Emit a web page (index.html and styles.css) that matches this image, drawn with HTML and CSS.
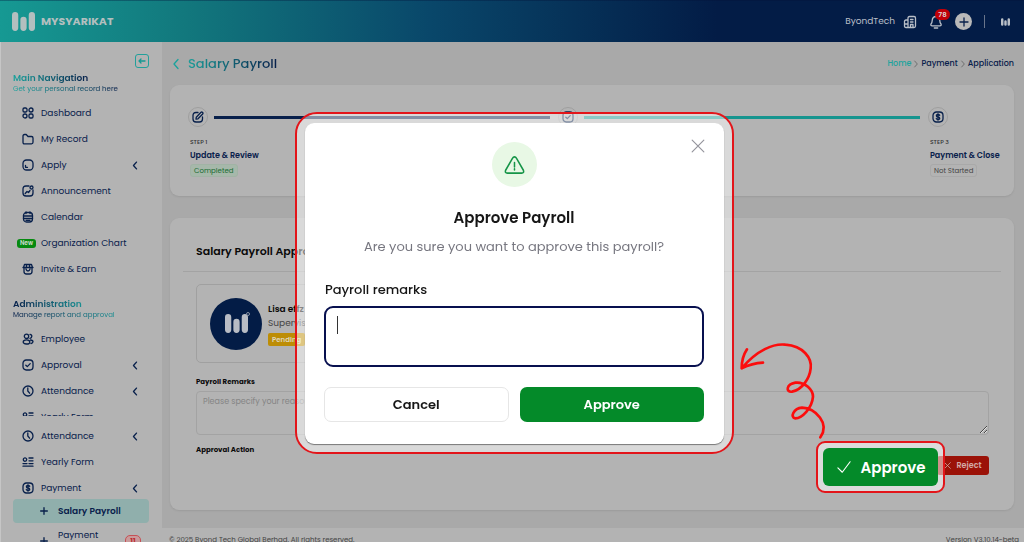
FILE: index.html
```html
<!DOCTYPE html>
<html lang="en">
<head>
<meta charset="utf-8">
<meta name="viewport" content="width=device-width, initial-scale=1">
<title>Salary Payroll</title>
<link rel="stylesheet" href="styles.css">
</head>
<body>
<svg class="sprite" aria-hidden="true">
  <symbol id="i-grid" viewBox="0 0 12 12"><rect x="1" y="1" width="4" height="4" rx="1.3"/><rect x="7" y="1" width="4" height="4" rx="2"/><rect x="1" y="7" width="4" height="4" rx="2"/><rect x="7" y="7" width="4" height="4" rx="1.3"/></symbol>
  <symbol id="i-folder" viewBox="0 0 12 12"><path d="M1 9.300V3Q1 1.500 2.500 1.500H4.200L6 3.500H9.500Q11 3.500 11 5V9.300Q11 10.800 9.500 10.800H2.500Q1 10.800 1 9.300Z"/></symbol>
  <symbol id="i-apply" viewBox="0 0 12 12"><rect x="1" y="1" width="10" height="10" rx="3.500"/><path d="M3.500 6.500V8.300H5.500"/></symbol>
  <symbol id="i-news" viewBox="0 0 12 12"><path d="M7 1H4Q1 1 1 4V8Q1 11 4 11H8Q11 11 11 8V5M3.200 8.500 5 6.500 6.500 7.500 8 5.500"/><circle cx="9.500" cy="2.500" r="1.500"/></symbol>
  <symbol id="i-calendar" viewBox="0 0 12 12"><rect x="1.500" y="1.500" width="9" height="9.500" rx="3"/><path d="M4 .8V2.500M8 .8V2.500M1.500 5H10.500M1.500 7.500H10.500M4 9.300H8"/></symbol>
  <symbol id="i-gift" viewBox="0 0 12 12"><path d="M1.500 4.500 2.500 1.500H9.500L10.500 4.500M1 4.500H11M2 5V8.500Q2 11 4.500 11H7.500Q10 11 10 8.500V5M4 6Q4.500 8 6 8T8 6M4.500 1.500V3.500M7.500 1.500V3.500"/></symbol>
  <symbol id="i-users" viewBox="0 0 12 12"><circle cx="4.500" cy="3.300" r="2.200"/><path d="M1.200 9Q1.200 6.800 4.500 6.800T7.800 9 4.500 11 1.200 9ZM8 1.300Q10 1.600 9.800 3.400 9.600 5 8 5.300M8.500 7Q11 7.300 11 8.800 10.900 10 9 10.500"/></symbol>
  <symbol id="i-check" viewBox="0 0 12 12"><rect x="1" y="1" width="10" height="10" rx="3.200"/><path d="M3.800 6.200 5.300 7.600 8.200 4.600"/></symbol>
  <symbol id="i-clock" viewBox="0 0 12 12"><circle cx="6" cy="6" r="5"/><path d="M5.800 3V6L7.600 8.200"/></symbol>
  <symbol id="i-form" viewBox="0 0 12 12"><circle cx="3" cy="3.600" r="1.700"/><path d="M7 2H11M7 4.800H11M1 7.600H5M7 7.600H11M1 10.200H11"/></symbol>
  <symbol id="i-dollar" viewBox="0 0 12 12"><rect x="1" y="1" width="10" height="10" rx="3.400"/><path d="M7.700 4.300Q7.200 3.500 6 3.500 4.400 3.500 4.400 4.700T6 6 7.700 7.300 6 8.500Q4.700 8.500 4.300 7.600M6 2.700V9.300"/></symbol>
  <symbol id="i-edit" viewBox="0 0 12 12"><path d="M6 1.500H4Q1 1.500 1 4.500V8Q1 11 4 11H7.500Q10.500 11 10.500 8V6M4 8.200 4.300 6.200 9 1.300Q9.800.7 10.600 1.500T10.700 3L6 7.800Z"/></symbol>
  <symbol id="i-left" viewBox="0 0 12 12"><path d="M8 1.500 4 6 8 10.500"/></symbol>
  <symbol id="i-right" viewBox="0 0 12 12"><path d="M4 1.500 8 6 4 10.500"/></symbol>
  <symbol id="i-plus" viewBox="0 0 12 12"><path d="M6 2V10M2 6H10"/></symbol>
  <symbol id="i-x" viewBox="0 0 12 12"><path d="M1 1 11 11M11 1 1 11"/></symbol>
  <symbol id="i-bars" viewBox="0 0 22 18"><path d="M3 3V15M11 7.500V15M19 3V15"/></symbol>
</svg>

<header class="topbar">
  <a class="brand" href="#"><svg class="brand-mark"><use href="#i-bars"/></svg>MYSYARIKAT</a>
  <div class="topbar-tools">
    <span class="company">ByondTech</span>
    <button class="tool" aria-label="Company"><svg class="icon icon-lg" viewBox="0 0 14 14"><path d="M5 12.500H3Q1.500 12.500 1.500 11V6.500Q1.500 5 3 5H5M1.500 9H5M5 12.500V3Q5 1.500 6.500 1.500H11Q12.500 1.500 12.500 3V11Q12.500 12.500 11 12.500ZM7.500 4.500H10M7.500 7H10M7.500 12.500V9.500H10V12.500"/></svg></button>
    <button class="tool bell" aria-label="Notifications"><svg class="icon icon-lg" viewBox="0 0 14 14"><path d="M7 1.500Q3.500 1.500 3.200 5.500 3.200 7.500 2 9 1.300 10.800 3.200 10.800H10.800Q12.700 10.800 12 9 10.800 7.500 10.800 5.500 10.500 1.500 7 1.500ZM5.300 13H8.700"/></svg><span class="count">78</span></button>
    <button class="add" aria-label="Add"><svg class="icon"><use href="#i-plus"/></svg></button>
    <span class="rule"></span>
    <button class="avatar-sm" aria-label="Account"><svg><use href="#i-bars"/></svg></button>
  </div>
</header>

<div class="shell">
  <aside class="sidebar">
    <button class="collapse" aria-label="Collapse menu"><svg class="icon"><path d="M9 6H3M5 4 3 6 5 8"/></svg></button>
    <div class="nav-head"><h2 class="grad-main">Main Navigation</h2><p class="grad-main">Get your personal record here</p></div>
    <nav class="nav">
      <a href="#"><svg class="icon"><use href="#i-grid"/></svg>Dashboard</a>
      <a href="#"><svg class="icon"><use href="#i-folder"/></svg>My Record</a>
      <a href="#"><svg class="icon"><use href="#i-apply"/></svg>Apply<svg class="icon chev"><use href="#i-left"/></svg></a>
      <a href="#"><svg class="icon"><use href="#i-news"/></svg>Announcement</a>
      <a href="#"><svg class="icon"><use href="#i-calendar"/></svg>Calendar</a>
      <a href="#" class="has-new"><span class="new">New</span>Organization Chart</a>
      <a href="#"><svg class="icon"><use href="#i-gift"/></svg>Invite &amp; Earn</a>
    </nav>
    <div class="nav-head admin"><h2 class="grad-admin">Administration</h2><p class="grad-admin">Manage report and approval</p></div>
    <nav class="nav">
      <a href="#"><svg class="icon"><use href="#i-users"/></svg>Employee</a>
      <a href="#"><svg class="icon"><use href="#i-check"/></svg>Approval<svg class="icon chev"><use href="#i-left"/></svg></a>
      <a href="#"><svg class="icon"><use href="#i-clock"/></svg>Attendance<svg class="icon chev"><use href="#i-left"/></svg></a>
      <div class="cut"><a href="#"><svg class="icon"><use href="#i-form"/></svg>Yearly Form</a></div>
      <a href="#"><svg class="icon"><use href="#i-clock"/></svg>Attendance<svg class="icon chev"><use href="#i-left"/></svg></a>
      <a href="#"><svg class="icon"><use href="#i-form"/></svg>Yearly Form</a>
      <a href="#"><svg class="icon"><use href="#i-dollar"/></svg>Payment<svg class="icon chev"><use href="#i-left"/></svg></a>
      <a href="#" class="sub active"><svg class="icon"><use href="#i-plus"/></svg>Salary Payroll</a>
      <a href="#" class="sub tall"><svg class="icon"><use href="#i-plus"/></svg><span>Payment</span><b class="pill">11</b></a>
    </nav>
  </aside>

  <main class="main">
    <div class="content">
      <div class="page-head">
        <h1><svg class="icon"><use href="#i-left"/></svg><span>Salary Payroll</span></h1>
        <nav class="crumbs" aria-label="Breadcrumb"><a class="home" href="#">Home</a><svg class="icon"><use href="#i-right"/></svg><a href="#">Payment</a><svg class="icon"><use href="#i-right"/></svg><a href="#">Application</a></nav>
      </div>

      <section class="card steps">
        <div class="step"><div class="track"><span class="dot"><svg class="icon"><use href="#i-edit"/></svg></span><i class="line navy"></i></div><small>STEP 1</small><strong>Update &amp; Review</strong><span class="tag done">Completed</span></div>
        <div class="step"><div class="track"><span class="dot"><svg class="icon"><use href="#i-check"/></svg></span><i class="line teal"></i></div></div>
        <div class="step last"><div class="track"><span class="dot"><svg class="icon"><use href="#i-dollar"/></svg></span></div><small>STEP 3</small><strong>Payment &amp; Close</strong><span class="tag">Not Started</span></div>
      </section>

      <section class="card approval">
        <h2>Salary Payroll Approval</h2>
        <div class="approval-body">
          <div class="person">
            <span class="avatar"><svg><use href="#i-bars"/></svg><i></i></span>
            <div><strong>Lisa effz</strong><p>Supervisor</p><span class="pending">Pending</span></div>
          </div>
          <label class="field-label" for="remarks">Payroll Remarks</label>
          <textarea id="remarks" class="remarks" placeholder="Please specify your reason"></textarea>
          <p class="field-label">Approval Action</p>
          <div class="actions"><button class="reject"><svg class="icon"><use href="#i-x"/></svg>Reject</button></div>
        </div>
        <svg class="arrow" viewBox="20 30 279 300" aria-hidden="true"><path d="M50 58Q34 82 34 115Q65 100 98 98M34 115C80 60 130 40 165 44C220 48 245 85 241 115C238 145 215 180 185 185C165 187 168 163 195 158C225 155 248 180 248 200C245 235 215 265 195 265C178 262 190 235 215 233C255 235 300 280 270 322"/></svg>
        <div class="callout"><button><svg viewBox="0 0 16 16"><path d="M1 9 6 14 15 2"/></svg>Approve</button></div>
      </section>
    </div>
    <footer class="footer"><span>© 2025 Byond Tech Global Berhad. All rights reserved.</span><span>Version V3.10.14-beta</span></footer>
  </main>
</div>

<div class="overlay">
  <div class="frame">
    <div class="dialog" role="dialog" aria-labelledby="dlg-title">
      <button class="close" aria-label="Close"><svg class="icon"><use href="#i-x"/></svg></button>
      <span class="warn"><svg viewBox="0 0 22 20"><path d="M11 1.500Q12.300 1.500 13 2.800L20.300 15.500Q21.300 18.500 18.500 18.500H3.500Q.7 18.500 1.700 15.500L9 2.800Q9.700 1.500 11 1.500ZM11 7.500V12M11 14V15.300"/></svg></span>
      <h2 id="dlg-title">Approve Payroll</h2>
      <p>Are you sure you want to approve this payroll?</p>
      <label for="dlg-remarks">Payroll remarks</label>
      <div class="input-wrap"><textarea id="dlg-remarks"></textarea><i class="caret"></i></div>
      <div class="dialog-actions"><button class="cancel">Cancel</button><button class="approve">Approve</button></div>
    </div>
  </div>
</div>
</body>
</html>
```

FILE: styles.css
```css
* { box-sizing: border-box; }
body {
  margin: 0;
  height: 100vh;
  overflow: hidden;
  display: flex;
  flex-direction: column;
  background: #b3b3b3;
  color: #08204b;
  font-family: Poppins, Inter, "Open Sans", sans-serif;
  font-size: 9px;
}
h1, h2, p { margin: 0; }
a { color: inherit; text-decoration: none; }
button, textarea { font: inherit; color: inherit; }
button { border: 0; padding: 0; background: none; cursor: pointer; }
svg { fill: none; stroke: currentColor; stroke-linecap: round; stroke-linejoin: round; }
.sprite { display: none; }
.icon { width: 12px; height: 12px; flex: none; stroke-width: 1.3; }
.icon-lg { width: 14px; height: 14px; }

.topbar {
  flex: none;
  height: 42px;
  padding: 0 11px 0 12px;
  display: flex;
  align-items: center;
  justify-content: space-between;
  background: linear-gradient(90deg, #169993 0%, #12787d 18%, #09476a 42%, #031c46 70%);
  border-top: 1px solid #02133a55;
  color: #b9bfc8;
}
.brand { display: flex; align-items: center; gap: 6px; font-size: 11px; font-weight: 700; color: #b3bfbf; }
.brand-mark { width: 23px; height: 19px; stroke-width: 6; }
.topbar-tools { display: flex; align-items: center; gap: 12px; font-weight: 400; }
.company { margin-right: -4px; }
.tool { position: relative; display: flex; }
.count {
  position: absolute;
  left: 6px;
  top: -6px;
  width: 15px;
  border-radius: 6px;
  background: #c00008;
  color: #ddd;
  font-size: 7px;
  line-height: 11px;
  font-weight: 600;
}
.add { width: 17px; height: 17px; display: grid; place-items: center; border-radius: 50%; background: #b9b9b9; color: #08204b; }
.rule { width: 1px; height: 13px; background: #69758b; }
.avatar-sm { width: 16px; display: grid; place-items: center; }
.avatar-sm svg { width: 9px; height: 8px; stroke-width: 6; }

.shell { flex: 1; min-height: 0; display: flex; }
.sidebar { width: 162px; flex: none; padding: 12px 13px 0 12px; border-left: 1px solid #c6c6c6; display: flex; flex-direction: column; overflow: hidden; }
.sidebar > * { flex: none; }
.collapse { align-self: flex-end; width: 14px; height: 14px; display: grid; place-items: center; border: 1px solid #22a09b; border-radius: 3px; color: #169993; }
.nav-head { padding: 4px 0 6px; }
.nav-head h2 { font-size: 9px; line-height: 12px; font-weight: 600; }
.nav-head p { font-size: 7px; line-height: 10px; font-weight: 400; }
.nav-head.admin { padding: 16px 0 6px; }
.grad-main, .grad-admin, .page-head h1 span { width: fit-content; color: transparent; background-clip: text; -webkit-background-clip: text; }
.grad-main { background-image: linear-gradient(90deg, #1aa39d, #08204b); }
.grad-admin { background-image: linear-gradient(90deg, #08204b, #1a8f92); }
.nav a { height: 26px; display: flex; align-items: center; gap: 7px; padding-left: 9px; font-weight: 400; white-space: nowrap; }
.nav .has-new { padding-left: 4px; gap: 5px; }
.new { width: 19px; border-radius: 3px; background: #068a10; color: #d0dccf; font-size: 6px; line-height: 9px; font-weight: 600; text-align: center; }
.chev { margin-left: auto; margin-right: 8px; stroke-width: 1.8; height: 9px; }
.cut { height: 12px; margin-bottom: 7px; overflow: hidden; }
.nav .sub { height: 24px; padding-left: 26px; gap: 9px; border-radius: 4px; margin-top: -2px; }
.sub .icon { width: 10px; height: 10px; stroke-width: 1.6; }
.nav .active { background: #90afac; font-weight: 600; }
.nav .tall { height: 36px; margin-top: 0; }
.tall span { margin-bottom: 12px; }
.pill { margin-left: auto; margin-right: 8px; width: 16px; border: 1px solid #c65055; border-radius: 5px; background: #c99a9b; color: #bd2b31; font-size: 7px; line-height: 10px; text-align: center; }

.main { flex: 1; min-width: 0; display: flex; flex-direction: column; background: #a9a9a9; }
.content { flex: 1; padding: 11px 10px 18px 8px; }
.page-head { height: 22px; margin-bottom: 10px; display: flex; align-items: center; justify-content: space-between; }
.page-head h1 { display: flex; align-items: center; gap: 6px; font-size: 13px; font-weight: 500; color: #1aa39d; }
.page-head h1 span { background-image: linear-gradient(90deg, #1a9d98, #08204b); }
.crumbs { display: flex; align-items: center; gap: 1px; font-size: 8px; font-weight: 500; }
.crumbs .home { color: #1fa39d; }
.crumbs .icon { width: 8px; height: 8px; color: #666; }

.card { border-radius: 9px; background: #b3b3b3; box-shadow: 0 1px 2px #9b9b9b; }
.steps { display: grid; grid-template-columns: 1fr 1fr 70px; min-height: 111px; padding: 22px 16px 18px 18px; margin-bottom: 22px; }
.step { display: flex; flex-direction: column; align-items: flex-start; }
.step > * { margin-left: 2px; white-space: nowrap; }
.step .track { margin: 0 0 10px; width: 100%; height: 20px; display: flex; align-items: center; gap: 6px; padding-right: 8px; }
.dot { width: 20px; height: 20px; flex: none; display: grid; place-items: center; border: 1px solid #9f9f9f; border-radius: 50%; }
.line { flex: 1; height: 3px; }
.navy { background: #08204b; }
.teal { background: #16958f; }
.step small { font-size: 6px; line-height: 10px; font-weight: 500; color: #333; }
.step strong { font-size: 8px; line-height: 17px; font-weight: 600; }
.tag { padding: 0 3px; border: 1px solid #a9a9a9; border-radius: 3px; font-size: 7px; line-height: 11px; color: #444; font-weight: 400; }
.done { background: #a6b8aa; border-color: #a1b3a5; color: #176b30; }

.approval { position: relative; padding: 22px 13px 35px; color: #0a0a0a; }
.approval h2 { padding: 0 13px; height: 32px; border-bottom: 1px solid #a3a3a3; font-size: 11px; line-height: 22px; font-weight: 600; }
.approval-body { padding: 12px 12px 0 13px; }
.person { width: 50%; height: 79px; display: flex; align-items: center; gap: 6px; padding-left: 13px; border: 1px solid #a0a0a0; border-radius: 5px; margin-bottom: 13px; }
.avatar { position: relative; width: 52px; height: 52px; display: grid; place-items: center; border-radius: 50%; background: #031c46; color: #b8bcc4; }
.avatar svg { width: 23px; height: 21px; stroke-width: 6; }
.avatar i { position: absolute; right: 12px; top: 14px; width: 4px; height: 4px; border: 1px solid #8a93a3; border-radius: 50%; }
.person strong { display: block; font-size: 9px; line-height: 14px; font-weight: 600; }
.person p { font-size: 9px; line-height: 14px; color: #444; }
.pending { display: inline-block; padding: 0 4px; margin-top: 3px; border-radius: 2px; background: #bd8d05; color: #ded6bd; font-size: 7px; line-height: 13px; font-weight: 600; }
.field-label { display: block; font-size: 7px; line-height: 12px; font-weight: 700; }
.remarks { display: block; width: 100%; height: 44px; margin: 3px 0 9px; padding: 4px 6px; border: 1px solid #a3a3a3; border-radius: 4px; background: none; font-size: 8px; resize: vertical; }
.remarks::placeholder { color: #858585; }
.actions { display: flex; justify-content: flex-end; }
.reject { width: 52px; height: 19px; display: flex; align-items: center; justify-content: center; gap: 5px; border-radius: 3px; background: #9b1208; color: #d3aaa6; font-size: 8px; font-weight: 600; }
.reject .icon { width: 7px; height: 7px; }
.arrow { position: absolute; right: 184px; bottom: 70px; width: 93px; height: 100px; color: #fb0d0d; stroke-width: 8; z-index: 3; }
.callout { position: absolute; right: 69px; bottom: 17px; padding: 5px; border: 2px solid #e3151a; border-radius: 9px; background: #ffffff88; }
.callout button { width: 115px; height: 38px; display: flex; align-items: center; justify-content: center; gap: 9px; border-radius: 6px; background: #048a29; color: #fff; font-size: 15px; font-weight: 600; }
.callout svg { width: 16px; height: 14px; stroke-width: 1.3; }
.footer { height: 14px; flex: none; display: flex; justify-content: space-between; padding: 5px 5px 0 7px; overflow: hidden; background: #b3b3b3; color: #444; font-size: 7px; line-height: 14px; white-space: nowrap; }

.overlay { position: fixed; inset: 0; display: flex; justify-content: center; align-items: flex-start; padding: 112px 0 0 5px; pointer-events: none; }
.frame { width: 439px; padding: 9px 8px 8px; border: 2px solid #e3151a; border-radius: 22px; background: #ffffff80; pointer-events: auto; }
.dialog { position: relative; display: flex; flex-direction: column; align-items: center; padding: 19px 20px 22px 19px; border-radius: 9px; background: #fff; box-shadow: 0 1px 1px #777; color: #161616; }
.close { position: absolute; right: 19px; top: 16px; color: #94949c; display: flex; }
.close .icon { width: 14px; height: 14px; stroke-width: 1; }
.warn { width: 45px; height: 45px; display: grid; place-items: center; border-radius: 50%; background: #e8f8e5; color: #159447; }
.warn svg { width: 21px; height: 20px; stroke-width: 1.6; }
.dialog h2 { margin-top: 20px; font-size: 15px; line-height: 22px; font-weight: 600; }
.dialog p { margin: 8px 0 24px; font-size: 13px; line-height: 20px; color: #777780; }
.dialog label { align-self: flex-start; padding-left: 1px; font-size: 13px; line-height: 18px; font-weight: 500; }
.input-wrap { position: relative; width: 100%; margin: 7px 0 20px; }
.input-wrap textarea { display: block; width: 100%; height: 61px; padding: 10px; border: 2px solid #08104f; border-radius: 9px; background: #fff; resize: none; }
.caret { position: absolute; left: 13px; top: 10px; width: 1px; height: 18px; background: #333; }
.dialog-actions { width: 100%; display: grid; grid-template-columns: 1fr 1fr; gap: 11px; }
.dialog-actions button { height: 35px; border-radius: 7px; font-size: 13px; font-weight: 600; }
.cancel { border: 1px solid #e6e6e6; }
.approve { background: #048a29; color: #fff; }
```
